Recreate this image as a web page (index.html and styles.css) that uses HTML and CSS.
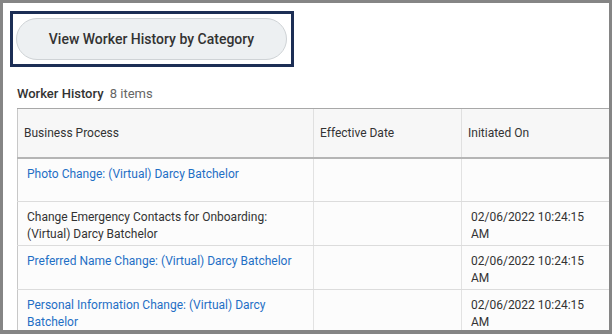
FILE: index.html
```html
<!DOCTYPE html>
<html>
<head>
<meta charset="utf-8">
<link rel="stylesheet" href="styles.css">
</head>
<body>
<div class="panel">
  <div class="focus-box">
    <button class="pill-btn">View Worker History by Category</button>
  </div>
  <div class="section-title">Worker History <span class="count">8 items</span></div>
  <div class="table-wrap">
    <table class="grid">
      <colgroup>
        <col class="c1"><col class="c2"><col class="c3"><col class="c4">
      </colgroup>
      <thead>
        <tr><th>Business Process</th><th>Effective Date</th><th>Initiated On</th><th></th></tr>
      </thead>
      <tbody>
        <tr><td><a class="link">Photo Change: (Virtual) Darcy Batchelor</a></td><td></td><td></td><td></td></tr>
        <tr><td>Change Emergency Contacts for Onboarding: (Virtual) Darcy Batchelor</td><td></td><td>02/06/2022 10:24:15 AM</td><td></td></tr>
        <tr><td><a class="link">Preferred Name Change: (Virtual) Darcy Batchelor</a></td><td></td><td>02/06/2022 10:24:15 AM</td><td></td></tr>
        <tr><td><a class="link">Personal Information Change: (Virtual) Darcy Batchelor</a></td><td></td><td>02/06/2022 10:24:15 AM</td><td></td></tr>
      </tbody>
    </table>
  </div>
</div>
</body>
</html>
```
FILE: styles.css
```css
html, body {
  margin: 0;
  padding: 0;
  background: #858585;
  height: 334px;
  overflow: hidden;
}
body {
  font-family: Roboto, "Liberation Sans", sans-serif;
  color: #333;
}
.panel {
  margin: 3px 3px 0 3px;
  height: 327px;
  background: #fff;
  overflow: hidden;
  padding: 8px 0 0 7px;
  box-sizing: border-box;
}
.focus-box {
  width: 284px;
  height: 56px;
  box-sizing: border-box;
  border: 3px solid #1c2e55;
  padding: 4px 4px 0 3px;
}
.pill-btn {
  display: block;
  width: 271px;
  height: 42px;
  border: 1px solid #cfd3d6;
  border-radius: 21px;
  background: #edf0f2;
  font-family: Roboto, "Liberation Sans", sans-serif;
  font-size: 14px;
  font-weight: 500;
  color: #333;
  padding: 0;
}
.section-title {
  margin: 19px 0 0 7px;
  font-size: 13px;
  font-weight: 500;
  color: #333;
  line-height: 16px;
}
.count {
  font-weight: 400;
  color: #666;
  margin-left: 3px;
}
.table-wrap {
  margin: 6px 0 0 7px;
}
.grid {
  border-collapse: collapse;
  table-layout: fixed;
  width: 740px;
  font-size: 12px;
}
.c1 { width: 296px; }
.c2 { width: 148px; }
.c3 { width: 148px; }
.c4 { width: 148px; }
.grid th {
  height: 49px;
  box-sizing: border-box;
  background: #f7f7f7;
  text-align: left;
  font-weight: 400;
  padding: 0 6px;
  border-top: 1px solid #a8a8a8;
  border-bottom: 2px solid #b5b5b5;
  border-left: 1px solid #e0e0e0;
  color: #333;
}
.grid th:first-child { border-left: 1px solid #c8c8c8; }
.grid td {
  height: 44px;
  box-sizing: border-box;
  vertical-align: top;
  padding: 7px 9px 0 9px;
  line-height: 17px;
  border-bottom: 1px solid #dcdcdc;
  border-left: 1px solid #e2e2e2;
  background: #fcfcfc;
}
.grid td:first-child { border-left: 1px solid #c8c8c8; }
.link {
  color: #1f6fc5;
  text-decoration: none;
}
```
